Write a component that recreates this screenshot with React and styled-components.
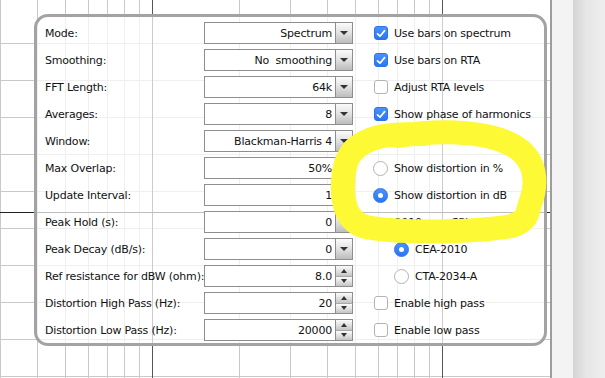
import styled, { createGlobalStyle } from "styled-components";

const GlobalStyle = createGlobalStyle`
  body {
    margin: 0;
    font-family: "DejaVu Sans", "Liberation Sans", sans-serif;
    color: #111;
  }
`;

const DECADE = 290;
const minorX = [];
[-138, 152].forEach((base) => {
    for (let k = 2; k <= 9; k++) minorX.push(base + DECADE * Math.log10(k));
});
const majorX = [152, 442];
const minorY = [43, 80, 117, 154, 191, 228, 265, 302, 339, 376];

const rows = [
    { label: "Mode:", value: "Spectrum", kind: "select", right: { type: "check", on: true, text: "Use bars on spectrum" } },
    { label: "Smoothing:", value: "No  smoothing", kind: "select", right: { type: "check", on: true, text: "Use bars on RTA" } },
    { label: "FFT Length:", value: "64k", kind: "select", right: { type: "check", on: false, text: "Adjust RTA levels" } },
    { label: "Averages:", value: "8", kind: "select", right: { type: "check", on: true, text: "Show phase of harmonics" } },
    { label: "Window:", value: "Blackman-Harris 4", kind: "select", right: null },
    { label: "Max Overlap:", value: "50%", kind: "select", right: { type: "radio", on: false, text: "Show distortion in %" } },
    { label: "Update Interval:", value: "1", kind: "select", right: { type: "radio", on: true, text: "Show distortion in dB" } },
    { label: "Peak Hold (s):", value: "0", kind: "select", right: { type: "title", text: "CEA2010 max SPL limits:" } },
    { label: "Peak Decay (dB/s):", value: "0", kind: "select", right: { type: "radio", on: true, indent: true, text: "CEA-2010" } },
    { label: "Ref resistance for dBW (ohm):", value: "8.0", kind: "spin", right: { type: "radio", on: false, indent: true, text: "CTA-2034-A" } },
    { label: "Distortion High Pass (Hz):", value: "20", kind: "spin", right: { type: "check", on: false, text: "Enable high pass" } },
    { label: "Distortion Low Pass (Hz):", value: "20000", kind: "spin", right: { type: "check", on: false, text: "Enable low pass" } },
];

const Screen = styled.div`
  position: relative;
  display: flex;
  width: 605px;
  height: 378px;
  overflow: hidden;
  background: #fff;
`;

const PlotArea = styled.div`
  display: grid;
  width: 550px;
  flex: none;
  border-right: 2px solid #9d9d9d;

  & > * {
    grid-area: 1 / 1;
  }
`;

const PanelLayer = styled.div`
  padding: 14px 0 0 34px;
  align-self: start;
`;

const Panel = styled.div`
  box-sizing: border-box;
  width: 513px;
  height: 332px;
  border: 3px solid #a3a3a3;
  border-radius: 14px;
  background: rgba(255, 255, 255, 0.7);
  padding: 5px 0 0 8px;
  display: grid;
  grid-template-columns: 159px 149px 1fr;
  grid-auto-rows: 22px;
  row-gap: 5px;
  font-size: 11px;
  letter-spacing: -0.2px;
`;

const Label = styled.div`
  align-self: center;
  white-space: nowrap;
`;

const Field = styled.div`
  box-sizing: border-box;
  display: flex;
  height: 22px;
  border: 1px solid #8e8e8e;
  background: #fff;
`;

const Value = styled.div`
  flex: 1;
  display: flex;
  align-items: center;
  justify-content: flex-end;
  padding-right: 3px;
  white-space: pre;
`;

const ArrowButton = styled.div`
  width: 16px;
  display: flex;
  align-items: center;
  justify-content: center;
  border-left: 1px solid #8e8e8e;
  background: linear-gradient(#fbfbfb, #e4e4e4 45%, #bcbcbc);
`;

const SpinButtons = styled.div`
  width: 16px;
  display: flex;
  flex-direction: column;
  border-left: 1px solid #8e8e8e;
`;

const SpinHalf = styled.div`
  flex: 1;
  display: flex;
  align-items: center;
  justify-content: center;
  background: linear-gradient(#fbfbfb, #dedede 55%, #c4c4c4);
  border-top: ${({ $lower }) => ($lower ? "1px solid #a8a8a8" : "none")};
`;

const Option = styled.div`
  display: flex;
  align-items: center;
  gap: 6px;
  padding-left: ${({ $indent }) => ($indent ? "42px" : "21px")};
  white-space: nowrap;
`;

const Title = styled.div`
  align-self: center;
  padding-left: 20px;
  white-space: nowrap;
`;

const Box = styled.span`
  box-sizing: border-box;
  width: 14px;
  height: 14px;
  border-radius: 3px;
  display: flex;
  align-items: center;
  justify-content: center;
  background: ${({ $on }) => ($on ? "linear-gradient(#4a92fa, #2a76f4)" : "#fff")};
  border: ${({ $on }) => ($on ? "1px solid #2c73e6" : "1px solid #b3b3b3")};
`;

const Radio = styled.span`
  box-sizing: border-box;
  width: 15px;
  height: 15px;
  margin-left: -1px;
  border-radius: 50%;
  display: flex;
  align-items: center;
  justify-content: center;
  background: ${({ $on }) => ($on ? "linear-gradient(#4a92fa, #2a76f4)" : "#fff")};
  border: ${({ $on }) => ($on ? "1px solid #2c73e6" : "1px solid #b3b3b3")};

  &::after {
    content: "";
    display: ${({ $on }) => ($on ? "block" : "none")};
    width: 5px;
    height: 5px;
    border-radius: 50%;
    background: #fff;
  }
`;

const Strip = styled.div`
  width: 21px;
  flex: none;
  background: #f3f3f3;
`;

const Shade = styled.div`
  flex: 1;
  background: linear-gradient(to right, #d4d4d4, #e6e6e6 40%, #eeeeee);
`;

const Highlight = styled.svg`
  position: absolute;
  left: 0;
  top: 0;
  pointer-events: none;
`;

const Tri = ({ w = 8, h = 4, up }) => (
    <svg width={w} height={h} viewBox={`0 0 ${w} ${h}`}>
        <path d={up ? `M0 ${h} L${w / 2} 0 L${w} ${h} Z` : `M0 0 L${w} 0 L${w / 2} ${h} Z`} fill="#333" />
    </svg>
);

const Grid = () => (
    <svg width="550" height="378">
        {minorY.map((y) => (
            <line key={y} x1="0" x2="550" y1={y + 0.5} y2={y + 0.5} stroke="#c9c9c9" />
        ))}
        {minorX.map((x) => (
            <line key={x} x1={Math.round(x) + 0.5} x2={Math.round(x) + 0.5} y1="0" y2="378" stroke="#c9c9c9" />
        ))}
        {majorX.map((x) => (
            <line key={x} x1={x + 0.5} x2={x + 0.5} y1="0" y2="378" stroke="#555" />
        ))}
        <line x1="0" x2="550" y1="212.5" y2="212.5" stroke="#222" />
    </svg>
);

const Control = ({ kind, value }) => (
    <Field>
        <Value>{value}</Value>
        {kind === "select" ? (
            <ArrowButton>
                <Tri />
            </ArrowButton>
        ) : (
            <SpinButtons>
                <SpinHalf>
                    <Tri w={6} h={4} up />
                </SpinHalf>
                <SpinHalf $lower>
                    <Tri w={6} h={4} />
                </SpinHalf>
            </SpinButtons>
        )}
    </Field>
);

const RightItem = ({ item }) => {
    if (!item) return <div />;
    if (item.type === "title") return <Title>{item.text}</Title>;
    if (item.type === "radio") {
        return (
            <Option $indent={item.indent}>
                <Radio $on={item.on} />
                {item.text}
            </Option>
        );
    }
    return (
        <Option>
            <Box $on={item.on}>
                {item.on && (
                    <svg width="10" height="9" viewBox="0 0 10 9">
                        <path d="M1.5 4.8 L4 7.2 L8.6 1.6" fill="none" stroke="#fff" strokeWidth="1.7" strokeLinecap="round" strokeLinejoin="round" />
                    </svg>
                )}
            </Box>
            {item.text}
        </Option>
    );
};

export default function App() {
    return (
        <Screen>
            <GlobalStyle />
            <PlotArea>
                <Grid />
                <PanelLayer>
                    <Panel>
                        {rows.map((row) => [
                            <Label key={row.label + "l"}>{row.label}</Label>,
                            <Control key={row.label + "c"} kind={row.kind} value={row.value} />,
                            <RightItem key={row.label + "r"} item={row.right} />,
                        ])}
                    </Panel>
                </PanelLayer>
            </PlotArea>
            <Strip />
            <Shade />
            {/* hand-drawn annotation */}
            <Highlight width="605" height="378">
                <path
                    d="M398 136 C445 129, 497 131, 521 151 C538 166, 536 188, 530 204 C527 214, 528 220, 512 226 C470 233, 395 233, 366 227 C346 222, 342 202, 343 182 C344 160, 350 147, 372 139 C386 134, 402 134, 424 134"
                    fill="none"
                    stroke="#fdf934"
                    strokeWidth="24"
                    strokeLinecap="round"
                    strokeLinejoin="round"
                />
            </Highlight>
        </Screen>
    );
}
